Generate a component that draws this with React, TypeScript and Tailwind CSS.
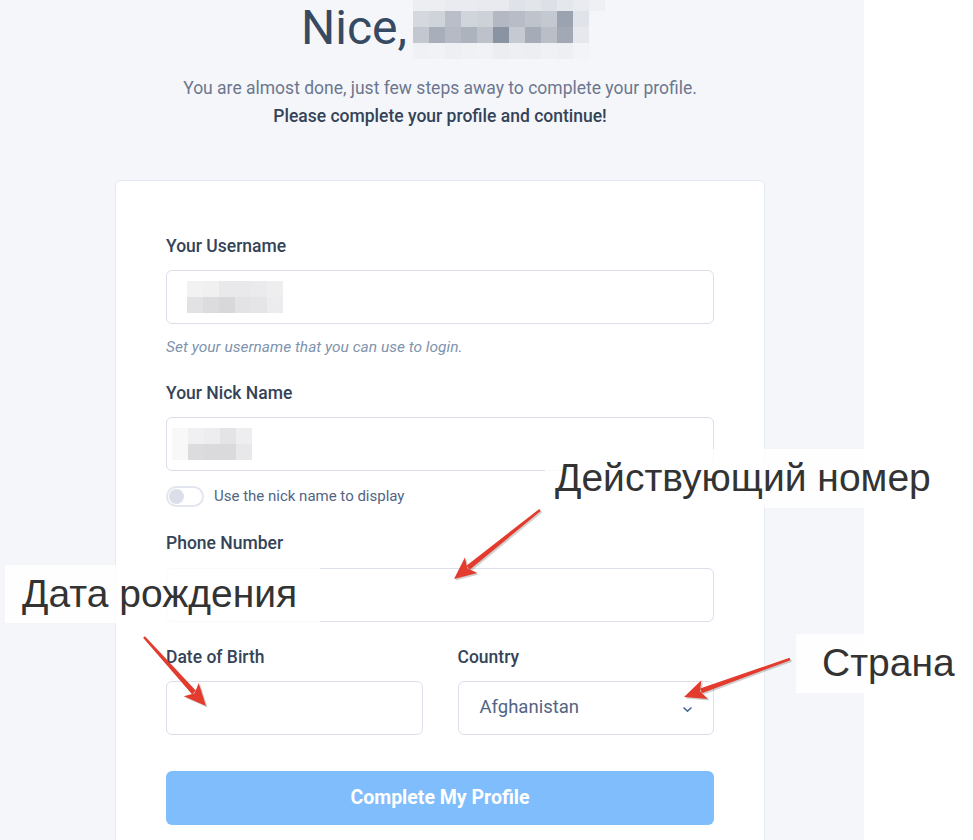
import React from "react";

const titleBlur: string[][] = [
  ["#eceef2", "#eceef2", "#e9ebf0", "#e9ebf0", "#e8eaef", "#e8eaef", "#dfe2e8", "#e2e5ea", "#dde0e7", "#e4e7ec", "#e9ebf0", "#eef0f4"],
  ["#d5d8df", "#cfd3da", "#b9bec8", "#d0d4db", "#cdd1d8", "#b3b8c3", "#b7bcc6", "#bfc4cc", "#c4c8d0", "#9ca3b0", "#e0e3e9", "#f5f6fa"],
  ["#c3c7cf", "#a9afba", "#b5bac4", "#adb3bd", "#bcc1ca", "#8a93a2", "#c5c9d1", "#a6acb7", "#b9bec7", "#a3a9b4", "#e6e8ed", "#f5f6fa"],
  ["#f0f1f5", "#f1f2f6", "#eeeff3", "#f0f1f5", "#f1f2f6", "#ebedf1", "#eeeff3", "#eceef2", "#f0f1f5", "#eeeff3", "#f3f4f7", "#f5f6fa"],
];

const userBlur: string[][] = [
  ["#f2f2f3", "#f0f0f1", "#e9e9eb", "#e9e9eb", "#ebebed", "#eeeeef"],
  ["#e2e2e4", "#dcdcde", "#d8d8db", "#e3e3e5", "#e5e5e7", "#ececee"],
];

const nickBlur: string[][] = [
  ["#f8f8f9", "#f0f0f2", "#ededef", "#e4e4e7", "#eeeef0"],
  ["#f8f8f9", "#dcdcdf", "#dadadd", "#dadadd", "#e8e8ea"],
];

function Pixels({ rows, size, heights }: { rows: string[][]; size: number; heights?: number[] }) {
  return (
    <div className="flex flex-col">
      {rows.map((r, i) => (
        <div key={i} className="flex">
          {r.map((c, j) => (
            <div key={j} style={{ width: size, height: heights ? heights[i] : size, background: c }} />
          ))}
        </div>
      ))}
    </div>
  );
}

function Arrow({ x1, y1, x2, y2 }: { x1: number; y1: number; x2: number; y2: number }) {
  const dx = x2 - x1;
  const dy = y2 - y1;
  const len = Math.sqrt(dx * dx + dy * dy);
  const ux = dx / len;
  const uy = dy / len;
  const px = -uy;
  const py = ux;
  const headLen = 22;
  const headW = 10;
  const bx = x2 - ux * headLen;
  const by = y2 - uy * headLen;
  const tw = 1.2;
  const hw = 2.6;
  const shaft = [
    [x1 + px * tw, y1 + py * tw],
    [bx + ux * 4 + px * hw, by + uy * 4 + py * hw],
    [bx + ux * 4 - px * hw, by + uy * 4 - py * hw],
    [x1 - px * tw, y1 - py * tw],
  ]
    .map((p) => p.join(","))
    .join(" ");
  const head = [
    [x2, y2],
    [bx + px * headW, by + py * headW],
    [bx + ux * 5, by + uy * 5],
    [bx - px * headW, by - py * headW],
  ]
    .map((p) => p.join(","))
    .join(" ");
  return (
    <g>
      <g transform="translate(1.5,1.5)" opacity="0.18">
        <polygon points={shaft} fill="#000" />
        <polygon points={head} fill="#000" />
      </g>
      <polygon points={shaft} fill="#e33b2e" />
      <polygon points={head} fill="#e33b2e" />
    </g>
  );
}

const label = "h-[22px] leading-[22px] text-[17.5px] font-medium text-[#344357]";
const input = "h-[54px] rounded-[6px] border border-[#dbdfea] bg-white";
const annot = "absolute bg-white/85 flex items-center text-[39px] text-[#333]";

export default function App() {
  return (
    <div
      className="relative flex w-[973px] h-[840px] overflow-hidden bg-white"
      style={{ fontFamily: "Roboto, 'Noto Sans', sans-serif" }}
    >
      <div className="w-[864px] h-full bg-[#f5f6fa] flex flex-col">
        <div className="ml-[115px] w-[650px] flex flex-col">
          <div className="flex items-start pl-[186px] h-[56px]">
            <span className="text-[48px] leading-[56px] text-[#364a63]">Nice,</span>
            <div className="ml-[6px]">
              <Pixels rows={titleBlur} size={16} heights={[11, 16, 16, 16]} />
            </div>
          </div>
          <p className="mt-[18px] text-center text-[17.5px] leading-[28px] text-[#6b778f]">
            You are almost done, just few steps away to complete your profile.
          </p>
          <p className="text-center text-[17.5px] leading-[28px] font-medium text-[#344357]">
            Please complete your profile and continue!
          </p>

          <div className="mt-[50px] bg-white border border-[#e5e9f2] rounded-[6px] px-[50px] pt-[54px] pb-[40px]">
            <div className={label}>Your Username</div>
            <div className={`${input} mt-[13px] flex items-center pl-[20px]`}>
              <Pixels rows={userBlur} size={16} />
            </div>
            <div className="mt-[13px] h-[20px] leading-[20px] text-[15.5px] italic text-[#8094ae]">
              Set your username that you can use to login.
            </div>

            <div className={`${label} mt-[25px]`}>Your Nick Name</div>
            <div className={`${input} mt-[13px] flex items-center pl-[5px]`}>
              <Pixels rows={nickBlur} size={16} />
            </div>
            <div className="mt-[15px] flex items-center h-[21px]">
              <div className="w-[38px] h-[21px] rounded-full border-2 border-[#e3e6ee] flex items-center pl-[1px]">
                <div className="w-[15px] h-[15px] rounded-full bg-[#dbdfea]" />
              </div>
              <span className="ml-[10px] text-[15px] text-[#526484]">Use the nick name to display</span>
            </div>

            <div className={`${label} mt-[25px]`}>Phone Number</div>
            <div className={`${input} mt-[14px]`} />

            <div className="mt-[24px] flex gap-[35px]">
              <div className="flex-1">
                <div className={label}>Date of Birth</div>
                <div className={`${input} mt-[13px]`} />
              </div>
              <div className="flex-1">
                <div className={label}>Country</div>
                <div className={`${input} mt-[13px] flex items-center justify-between pl-[21px] pr-[20px]`}>
                  <span className="text-[18.5px] text-[#526484]">Afghanistan</span>
                  <svg width="11" height="7" viewBox="0 0 11 7" className="mt-[3px]">
                    <path d="M1.5 1.5 L5.5 5.2 L9.5 1.5" fill="none" stroke="#4b6a9b" strokeWidth="1.6" />
                  </svg>
                </div>
              </div>
            </div>

            <div className="mt-[36px] h-[54px] rounded-[6px] bg-[#80bdfd] flex items-center justify-center text-white text-[19.5px] font-bold">
              Complete My Profile
            </div>
          </div>
        </div>
      </div>

      {/* annotation overlays */}
      <div
        className={`${annot} left-[545px] top-[449px] w-[400px] h-[59px] pl-[10px]`}
        style={{ fontFamily: "'Liberation Sans', Arial, sans-serif" }}
      >
        Действующий номер
      </div>
      <div
        className={`${annot} left-[5px] top-[565px] w-[315px] h-[58px] pl-[17px]`}
        style={{ fontFamily: "'Liberation Sans', Arial, sans-serif" }}
      >
        Дата рождения
      </div>
      <div
        className={`${annot} left-[796px] top-[634px] w-[177px] h-[59px] pl-[26px]`}
        style={{ fontFamily: "'Liberation Sans', Arial, sans-serif" }}
      >
        Страна
      </div>
      <svg className="absolute left-0 top-0 pointer-events-none" width="973" height="840">
        <Arrow x1={540} y1={510} x2={454} y2={579} />
        <Arrow x1={144} y1={637} x2={206} y2={706} />
        <Arrow x1={790} y1={659} x2={684} y2={697} />
      </svg>
    </div>
  );
}
